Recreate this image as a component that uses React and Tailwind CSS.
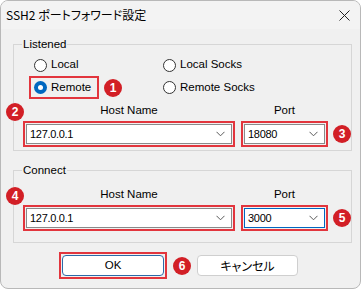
import React from 'react';

const FONT = "font-['Liberation_Sans','Noto_Sans_CJK_JP',sans-serif]";
const JP = "font-['Noto_Sans_CJK_JP',sans-serif] [font-feature-settings:'palt']";

function Badge({ n }) {
  return (
    <div className="w-[18px] h-[18px] shrink-0 rounded-full bg-[#d21f26] text-white text-[12px] font-bold leading-[18px] text-center">
      {n}
    </div>
  );
}

function Chevron() {
  return (
    <svg width="9" height="6" viewBox="0 0 9 6" className="shrink-0">
      <polyline points="0.5,0.8 4.5,4.8 8.5,0.8" fill="none" stroke="#5a5a5a" strokeWidth="1" />
    </svg>
  );
}

function Combo({ value, width, focused }) {
  return (
    <div className={`shrink-0 border-2 border-[#e2353d] p-[1px] ${width}`}>
      <div
        className={`h-[20px] flex items-center justify-between bg-white border pl-[3px] pr-[6px] ${
          focused ? 'border-[#0067c0]' : 'border-[#8a8a8a]'
        }`}
      >
        <span className="text-[11px] text-black tracking-[-0.3px]">{value}</span>
        <Chevron />
      </div>
    </div>
  );
}

function Radio({ label, checked }) {
  return (
    <div className="flex items-center gap-[4px]">
      {checked ? (
        <div className="w-[13px] h-[13px] rounded-full bg-[#0067c0] flex items-center justify-center">
          <div className="w-[5px] h-[5px] rounded-full bg-white" />
        </div>
      ) : (
        <div className="w-[13px] h-[13px] rounded-full border border-[#333] bg-white" />
      )}
      <span className="text-[11.5px] text-black">{label}</span>
    </div>
  );
}

function HostPortRows({ badgeA, badgeB, host, port, portFocused }) {
  return (
    <div>
      <div className="relative flex h-[16px] items-center pl-[9px]">
        <div className="absolute left-[-8px] top-0">
          <Badge n={badgeA} />
        </div>
        <div className="w-[212px] text-center text-[11.5px]">Host Name</div>
        <div className="w-[87px] ml-[6px] text-center text-[11.5px]">Port</div>
      </div>
      <div className="flex items-center mt-[2px] pl-[9px]">
        <Combo value={host} width="w-[212px]" />
        <div className="w-[6px] shrink-0" />
        <Combo value={port} width="w-[87px]" focused={portFocused} />
        <div className="ml-[5px]">
          <Badge n={badgeB} />
        </div>
      </div>
    </div>
  );
}

export default function App() {
  return (
    <div className={`w-[363px] h-[290px] bg-white ${FONT}`}>
      <div className="w-[361px] h-[289px] border border-[#b8b8b8] rounded-[8px] bg-[#f0f0f0] overflow-hidden flex flex-col">
        <div className="h-[28px] bg-[#f3f3f3] flex items-center justify-between pl-[5px] pr-[10px]">
          <span className={`text-[12px] text-black ${JP}`}>SSH2 ポートフォワード設定</span>
          <svg width="11" height="11" viewBox="0 0 11 11">
            <path d="M0.5 0.5 L10.5 10.5 M10.5 0.5 L0.5 10.5" stroke="#222" strokeWidth="1" />
          </svg>
        </div>

        <fieldset className="mt-[8px] ml-[12px] w-[337px] border border-[#d6d6d6] pb-[3px]">
          <legend className="ml-[8px] px-[1px] text-[11.5px] leading-[15px]">Listened</legend>
          <div className="pl-[15px] pt-[2px]">
            <div className="grid grid-cols-[129px_1fr]">
              <div className="h-[22px] flex items-center border-2 border-transparent pl-[3px] w-[70px]">
                <Radio label="Local" />
              </div>
              <div className="h-[22px] flex items-center border-2 border-transparent pl-[3px]">
                <Radio label="Local Socks" />
              </div>
              <div className="flex items-center">
                <div className="h-[23px] flex items-center border-2 border-[#e2353d] pl-[3px] w-[70px]">
                  <Radio label="Remote" checked />
                </div>
                <div className="ml-[5px]">
                  <Badge n="1" />
                </div>
              </div>
              <div className="h-[23px] flex items-center border-2 border-transparent pl-[3px]">
                <Radio label="Remote Socks" />
              </div>
            </div>
          </div>
          <div className="mt-[4px]">
            <HostPortRows badgeA="2" badgeB="3" host="127.0.0.1" port="18080" />
          </div>
        </fieldset>

        <fieldset className="mt-[12px] ml-[12px] w-[337px] border border-[#d6d6d6] pb-[11px]">
          <legend className="ml-[8px] px-[1px] text-[11.5px] leading-[15px]">Connect</legend>
          <div className="pt-[9px]">
            <HostPortRows badgeA="4" badgeB="5" host="127.0.0.1" port="3000" portFocused />
          </div>
        </fieldset>

        <div className="flex items-center mt-[9px] pl-[58px]">
          <div className="border-2 border-[#e2353d] p-[1px]">
            <div className="w-[102px] h-[21px] bg-white border border-[#2d6aa8] rounded-[4px] flex items-center justify-center text-[11.5px]">
              OK
            </div>
          </div>
          <div className="ml-[6px]">
            <Badge n="6" />
          </div>
          <div className={`ml-[6px] w-[101px] h-[21px] bg-white border border-[#cfcfcf] rounded-[4px] flex items-center justify-center text-[12px] ${JP}`}>
            キャンセル
          </div>
        </div>
      </div>
    </div>
  );
}
